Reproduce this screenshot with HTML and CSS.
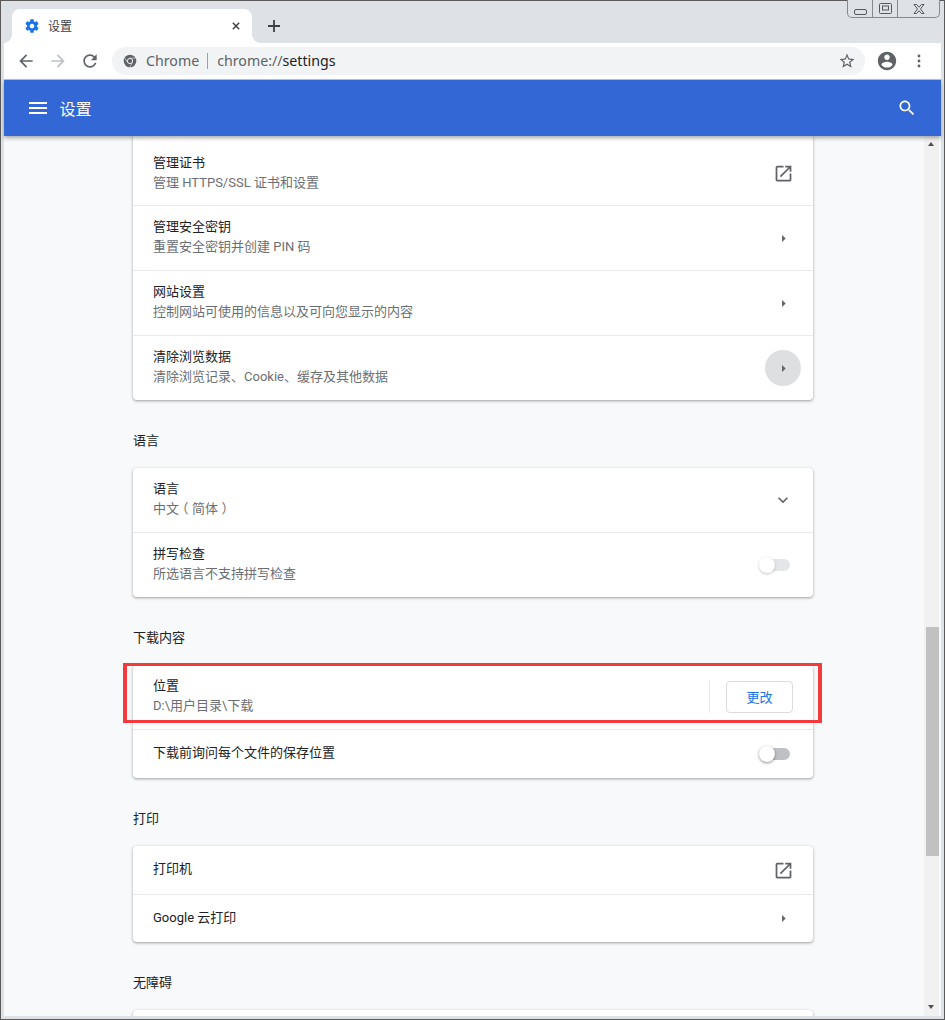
FILE: index.html
```html
<!DOCTYPE html>
<html lang="zh-CN">
<head>
<meta charset="utf-8">
<title>设置</title>
<link rel="stylesheet" href="styles.css">
</head>
<body>
<div class="window">
  <div class="tabstrip">
    <div class="tab">
      <svg class="tab-icon" viewBox="0 0 24 24"><path d="M19.43 12.98c.04-.32.07-.64.07-.98s-.03-.66-.07-.98l2.11-1.65c.19-.15.24-.42.12-.64l-2-3.46c-.12-.22-.39-.3-.61-.22l-2.49 1c-.52-.4-1.08-.73-1.69-.98l-.38-2.65C14.46 2.18 14.25 2 14 2h-4c-.25 0-.46.18-.49.42l-.38 2.65c-.61.25-1.17.59-1.69.98l-2.49-1c-.23-.09-.49 0-.61.22l-2 3.46c-.13.22-.07.49.12.64l2.11 1.65c-.04.32-.07.65-.07.98s.03.66.07.98l-2.11 1.65c-.19.15-.24.42-.12.64l2 3.46c.12.22.39.3.61.22l2.49-1c.52.4 1.08.73 1.69.98l.38 2.65c.03.24.24.42.49.42h4c.25 0 .46-.18.49-.42l.38-2.65c.61-.25 1.17-.59 1.69-.98l2.49 1c.23.09.49 0 .61-.22l2-3.46c.12-.22.07-.49-.12-.64l-2.11-1.65zM12 15.5c-1.93 0-3.5-1.57-3.5-3.5s1.57-3.5 3.5-3.5 3.5 1.57 3.5 3.5-1.57 3.5-3.5 3.5z"/></svg>
      <span class="tab-title">设置</span>
      <svg class="tab-close" viewBox="0 0 10 10"><path d="M1 1l8 8M9 1l-8 8"/></svg>
    </div>
    <svg class="new-tab" viewBox="0 0 12 12"><path d="M6 0v12M0 6h12"/></svg>
  </div>

  <div class="toolbar">
    <svg class="tool tool-back" viewBox="0 0 24 24"><path d="M20 11H7.830l5.590-5.590L12 4l-8 8 8 8 1.410-1.410L7.830 13H20v-2z"/></svg>
    <svg class="tool tool-forward" viewBox="0 0 24 24"><path d="M12 4l-1.410 1.410L16.170 11H4v2h12.170l-5.580 5.590L12 20l8-8z"/></svg>
    <svg class="tool tool-reload" viewBox="0 0 24 24"><path d="M17.65 6.35C16.2 4.9 14.21 4 12 4c-4.42 0-7.99 3.58-7.99 8s3.57 8 7.99 8c3.73 0 6.84-2.55 7.73-6h-2.08c-.82 2.33-3.04 4-5.65 4-3.31 0-6-2.69-6-6s2.69-6 6-6c1.66 0 3.14.69 4.22 1.78L13 11h7V4l-2.35 2.35z"/></svg>
    <div class="omnibox">
      <svg class="chrome-logo" viewBox="0 0 16 16">
        <circle cx="8" cy="8" r="7.2"/>
        <path class="chrome-cut" d="M8 4.700h6.400M5.100 9.700L1.900 4.200M10.900 9.700l-3.200 5.500"/>
        <circle class="chrome-ring" cx="8" cy="8" r="3"/>
      </svg>
      <span class="omni-site">Chrome</span>
      <span class="omni-sep"></span>
      <span class="omni-url"><span class="omni-scheme">chrome://</span>settings</span>
      <svg class="omni-star" viewBox="0 0 24 24"><path d="M22 9.24l-7.19-.62L12 2 9.19 8.63 2 9.24l5.46 4.73L5.82 21 12 17.27 18.18 21l-1.63-7.03L22 9.24zM12 15.4l-3.76 2.27 1-4.28-3.32-2.88 4.38-.38L12 6.1l1.71 4.04 4.38.38-3.32 2.88 1 4.28L12 15.4z"/></svg>
    </div>
    <svg class="tool tool-account" viewBox="0 0 24 24"><path d="M12 2C6.48 2 2 6.48 2 12s4.48 10 10 10 10-4.48 10-10S17.52 2 12 2zm0 3c1.66 0 3 1.34 3 3s-1.34 3-3 3-3-1.34-3-3 1.34-3 3-3zm0 14.2c-2.5 0-4.71-1.28-6-3.22.03-1.99 4-3.08 6-3.08 1.99 0 5.97 1.09 6 3.08-1.29 1.94-3.5 3.22-6 3.22z"/></svg>
    <svg class="tool tool-menu" viewBox="0 0 24 24"><circle cx="12" cy="6" r="1.7"/><circle cx="12" cy="12" r="1.7"/><circle cx="12" cy="18" r="1.7"/></svg>
  </div>

  <header class="appbar">
    <svg class="app-menu" viewBox="0 0 24 24"><path d="M3 18h18v-2H3v2zm0-5h18v-2H3v2zm0-7v2h18V6H3z"/></svg>
    <h1 class="app-title">设置</h1>
    <svg class="app-search" viewBox="0 0 24 24"><path d="M15.5 14h-.79l-.28-.27C15.41 12.59 16 11.11 16 9.5 16 5.91 13.09 3 9.5 3S3 5.91 3 9.5 5.91 16 9.5 16c1.61 0 3.09-.59 4.23-1.57l.27.28v.79l5 4.99L20.49 19l-4.99-5zm-6 0C7.01 14 5 11.99 5 9.5S7.01 5 9.5 5 14 7.01 14 9.5 11.99 14 9.5 14z"/></svg>
  </header>

  <div class="viewport">
    <main class="content">
      <section class="card card-cut">
        <div class="row row-two row-first">
          <div class="row-text"><div class="row-label">管理证书</div><div class="row-sub">管理 HTTPS/SSL 证书和设置</div></div>
          <span class="slot"><svg class="ic-open" viewBox="0 0 24 24"><path d="M19 19H5V5h7V3H5c-1.11 0-2 .9-2 2v14c0 1.1.89 2 2 2h14c1.1 0 2-.9 2-2v-7h-2v7zM14 3v2h3.59l-9.83 9.83 1.41 1.41L19 6.41V10h2V3h-7z"/></svg></span>
        </div>
        <div class="row row-two">
          <div class="row-text"><div class="row-label">管理安全密钥</div><div class="row-sub">重置安全密钥并创建 PIN 码</div></div>
          <span class="slot"><svg class="ic-arrow" viewBox="0 0 24 24"><path d="M10 7l5 5-5 5z"/></svg></span>
        </div>
        <div class="row row-two">
          <div class="row-text"><div class="row-label">网站设置</div><div class="row-sub">控制网站可使用的信息以及可向您显示的内容</div></div>
          <span class="slot"><svg class="ic-arrow" viewBox="0 0 24 24"><path d="M10 7l5 5-5 5z"/></svg></span>
        </div>
        <div class="row row-two">
          <div class="row-text"><div class="row-label">清除浏览数据</div><div class="row-sub">清除浏览记录、Cookie、缓存及其他数据</div></div>
          <span class="slot slot-hover"><svg class="ic-arrow" viewBox="0 0 24 24"><path d="M10 7l5 5-5 5z"/></svg></span>
        </div>
      </section>

      <h2 class="section-title">语言</h2>
      <section class="card">
        <div class="row row-two row-first">
          <div class="row-text"><div class="row-label">语言</div><div class="row-sub">中文<span class="paren-open">（</span>简体<span class="paren-close">）</span></div></div>
          <span class="slot"><svg class="ic-expand" viewBox="0 0 24 24"><path d="M16.59 8.59L12 13.17 7.41 8.59 6 10l6 6 6-6z"/></svg></span>
        </div>
        <div class="row row-two">
          <div class="row-text"><div class="row-label">拼写检查</div><div class="row-sub">所选语言不支持拼写检查</div></div>
          <span class="toggle toggle-off"><span class="knob"></span></span>
        </div>
      </section>

      <h2 class="section-title">下载内容</h2>
      <section class="card">
        <div class="row row-two row-first">
          <div class="row-text"><div class="row-label">位置</div><div class="row-sub">D:\用户目录\下载</div></div>
          <span class="row-sep"></span>
          <button class="btn" type="button">更改</button>
        </div>
        <div class="row row-one">
          <div class="row-text"><div class="row-label">下载前询问每个文件的保存位置</div></div>
          <span class="toggle"><span class="knob"></span></span>
        </div>
        <div class="highlight"></div>
      </section>

      <h2 class="section-title">打印</h2>
      <section class="card">
        <div class="row row-one row-first">
          <div class="row-text"><div class="row-label">打印机</div></div>
          <span class="slot"><svg class="ic-open" viewBox="0 0 24 24"><path d="M19 19H5V5h7V3H5c-1.11 0-2 .9-2 2v14c0 1.1.89 2 2 2h14c1.1 0 2-.9 2-2v-7h-2v7zM14 3v2h3.59l-9.83 9.83 1.41 1.41L19 6.41V10h2V3h-7z"/></svg></span>
        </div>
        <div class="row row-one row-last">
          <div class="row-text"><div class="row-label">Google 云打印</div></div>
          <span class="slot"><svg class="ic-arrow" viewBox="0 0 24 24"><path d="M10 7l5 5-5 5z"/></svg></span>
        </div>
      </section>

      <h2 class="section-title">无障碍</h2>
      <section class="card card-tail"></section>
    </main>

    <div class="scrollbar">
      <span class="sb-arrow sb-up"></span>
      <div class="sb-track"><div class="sb-thumb"></div></div>
      <span class="sb-arrow sb-down"></span>
    </div>
  </div>

  <div class="winctl">
    <span class="winbtn winbtn-min"><svg viewBox="0 0 13 6"><rect x="0.5" y="0.5" width="12" height="5" rx="1.5"/></svg></span>
    <span class="winbtn winbtn-max"><svg viewBox="0 0 13 11"><rect x="0.5" y="0.5" width="12" height="10" rx="1"/><rect x="3.5" y="3" width="6" height="4"/></svg></span>
    <span class="winbtn winbtn-close"><svg viewBox="0 0 12 10"><path d="M1 .5h2.500L6 3.200 8.500 .5H11L7.500 5 11 9.500H8.500L6 6.800 3.500 9.500H1L4.500 5z"/></svg></span>
  </div>
</div>
</body>
</html>
```
FILE: styles.css
```css
* { box-sizing: border-box; }
html, body { margin: 0; padding: 0; }
body {
  width: 945px;
  height: 1020px;
  overflow: hidden;
  font-family: Roboto, "Noto Sans CJK SC", sans-serif;
  font-size: 13px;
  color: #202124;
  background: #dee1e6;
}
.window {
  position: relative;
  width: 945px;
  height: 1020px;
  display: flex;
  flex-direction: column;
  background: #dee1e6;
  border: 1px solid #5a5a5a;
  padding: 0 3px 3px 3px;
}

/* tab strip */
.tabstrip {
  height: 42px;
  flex: none;
  display: flex;
  align-items: flex-end;
  padding-left: 8px;
}
.tab {
  position: relative;
  width: 240px;
  height: 34px;
  background: #fff;
  border-radius: 8px 8px 0 0;
  display: flex;
  align-items: center;
  padding: 0 11px 0 12px;
}
.tab::before, .tab::after {
  content: "";
  position: absolute;
  bottom: 0;
  width: 8px;
  height: 8px;
}
.tab::before {
  left: -8px;
  background: radial-gradient(circle at 0 0, transparent 7.5px, #fff 8px);
}
.tab::after {
  right: -8px;
  background: radial-gradient(circle at 100% 0, transparent 7.5px, #fff 8px);
}
.tab-icon { width: 16px; height: 16px; fill: #1a73e8; flex: none; }
.tab-title { margin-left: 8px; padding-bottom: 2px; font-size: 12px; flex: 1; color: #3c4043; }
.tab-close { width: 8px; height: 8px; stroke: #3c4043; stroke-width: 1.8; fill: none; flex: none; margin-right: 1px; }
.new-tab {
  width: 12px;
  height: 12px;
  stroke: #3c4043;
  stroke-width: 1.8;
  fill: none;
  margin: 0 0 11px 16px;
  flex: none;
}

/* toolbar */
.toolbar {
  height: 37px;
  flex: none;
  background: #fff;
  border-bottom: 1px solid #c4c6c9;
  display: flex;
  align-items: center;
  position: relative;
}
.tool { width: 20px; height: 20px; fill: #5f6368; flex: none; }
.tool-back { margin-left: 12px; }
.tool-forward { margin-left: 12px; fill: #bdc1c6; }
.tool-reload { margin-left: 12px; }
.tool-account { width: 22px; height: 22px; margin-left: 11px; }
.tool-menu { margin-left: 11px; }
.omnibox {
  width: 753px;
  height: 28px;
  margin-left: 12px;
  border-radius: 14px;
  background: #f1f3f4;
  display: flex;
  align-items: center;
  padding: 0 9px 0 11px;
  font-family: "Noto Sans", sans-serif;
  font-size: 14.2px;
  line-height: 26px;
  flex: none;
}
.chrome-logo { width: 14px; height: 14px; flex: none; fill: #5f6368; }
.chrome-cut { stroke: #f1f3f4; stroke-width: .7; fill: none; }
.chrome-ring { fill: #5f6368; stroke: #f1f3f4; stroke-width: 1.1; }
.omni-site { margin-left: 9px; color: #5f6368; }
.omni-sep { width: 1px; height: 16px; background: #9aa0a6; margin: 0 9px 0 8px; }
.omni-url { flex: 1; color: #202124; }
.omni-scheme { color: #5f6368; }
.omni-star { width: 18px; height: 18px; fill: #5f6368; flex: none; }

/* blue bar */
.appbar {
  height: 56px;
  flex: none;
  background: #3367d6;
  display: flex;
  align-items: center;
  color: #fff;
  padding: 0 24px 0 22px;
  box-shadow: 0 2px 4px rgba(60, 64, 67, .45);
  position: relative;
  z-index: 2;
}
.app-menu { width: 24px; height: 24px; fill: #fff; flex: none; }
.app-title { margin: 0 0 0 9.5px; font-size: 16px; font-weight: 400; flex: 1; }
.app-search { width: 20px; height: 20px; fill: #fff; flex: none; }

/* content */
.viewport {
  flex: 1;
  min-height: 0;
  display: flex;
  background: #f8f9fa;
}
.content {
  flex: 1;
  min-width: 0;
  overflow: hidden;
  padding: 0 0 0 129px;
}
.card {
  position: relative;
  width: 680px;
  background: #fff;
  border-radius: 4px;
  box-shadow: 0 1px 2px 0 rgba(60, 64, 67, .3), 0 1px 3px 1px rgba(60, 64, 67, .15);
}
.card-cut { border-radius: 0 0 4px 4px; }
.card-tail { height: 40px; }
.section-title {
  margin: 31px 0 17px;
  font-size: 13px;
  line-height: 20px;
  font-weight: 400;
  color: #202124;
}
.row {
  display: flex;
  align-items: center;
  padding-left: 20px;
  border-top: 1px solid #e8eaed;
}
.row-first { border-top: 0; }
.row-two { height: 65px; }
.row-two.row-first { height: 64px; }
.card-cut .row-two.row-first { height: 69px; padding-top: 7px; }
.row-one { height: 49px; }
.row-one.row-first { height: 48px; }
.row-one.row-last { height: 48px; }
.row-text { flex: 1; min-width: 0; padding-bottom: 2px; }
.row-label { line-height: 20px; color: #202124; }
.row-sub { line-height: 20px; color: #6b6f74; }
.paren-open, .paren-close { font-feature-settings: "halt"; }
.paren-open { padding: 0 3.5px 0 3px; }
.paren-close { padding: 0 3px 0 3.5px; }
.slot {
  width: 36px;
  height: 36px;
  margin-right: 12px;
  display: flex;
  align-items: center;
  justify-content: center;
  border-radius: 50%;
  flex: none;
}
.card-cut .row-first .slot { margin-top: -2px; }
.slot-hover { background: #dedfe1; }
.ic-open { width: 21px; height: 21px; fill: #5f6368; }
.ic-arrow { width: 17px; height: 17px; fill: #5f6368; }
.ic-expand { width: 20px; height: 20px; fill: #5f6368; }
.row-sep { width: 1px; height: 32px; background: #e8eaed; flex: none; }
.btn {
  width: 67px;
  height: 32px;
  margin: 0 20px 0 16px;
  padding: 0 0 2px;
  background: #fff;
  border: 1px solid #dadce0;
  border-radius: 4px;
  color: #1a73e8;
  font: inherit;
  flex: none;
}
.toggle {
  position: relative;
  width: 30px;
  height: 12px;
  margin-right: 23px;
  border-radius: 6px;
  background: #bdc1c6;
  flex: none;
}
.knob {
  position: absolute;
  left: -1px;
  top: -2px;
  width: 16px;
  height: 16px;
  border-radius: 50%;
  background: #fff;
  box-shadow: 0 1px 3px rgba(0, 0, 0, .45);
}
.toggle-off { background: #e4e6e9; }
.toggle-off .knob { box-shadow: 0 1px 3px rgba(0, 0, 0, .22); }
.highlight {
  position: absolute;
  left: -10px;
  top: -2px;
  width: 699px;
  height: 60px;
  border: solid #f33a3c;
  border-width: 3px 4px;
  pointer-events: none;
}

/* scrollbar */
.scrollbar {
  width: 17px;
  flex: none;
  background: #f1f1f1;
  display: flex;
  flex-direction: column;
  border-right: 2px solid #f8f9fa;
  position: relative;
  z-index: 1;
}
.sb-arrow {
  height: 17px;
  flex: none;
  position: relative;
}
.sb-arrow::after {
  content: "";
  position: absolute;
  left: 4px;
  border-left: 3.5px solid transparent;
  border-right: 3.5px solid transparent;
}
.sb-up::after { top: 6px; border-bottom: 4px solid #505050; }
.sb-down::after { top: 6px; border-top: 4px solid #505050; }
.sb-track { flex: 1; padding: 474px 0 0 2px; }
.sb-thumb { width: 13px; height: 229px; background: #c1c1c1; }

/* window controls */
.winctl {
  position: absolute;
  top: -1px;
  right: 4px;
  width: 93px;
  height: 18px;
  display: flex;
  border: 1px solid #85888c;
  border-top: 0;
  border-radius: 0 0 5px 5px;
  background: #dee1e6;
  z-index: 3;
}
.winbtn {
  display: flex;
  align-items: center;
  justify-content: center;
  border-left: 1px solid #85888c;
}
.winbtn:first-child { border-left: 0; }
.winbtn svg { fill: none; stroke: #55585c; stroke-width: 1; }
.winbtn-min { width: 24px; }
.winbtn-min svg { width: 13px; height: 6px; margin-top: 6px; }
.winbtn-max { width: 25px; }
.winbtn-max svg { width: 13px; height: 11px; }
.winbtn-close { flex: 1; }
.winbtn-close svg { width: 12px; height: 10px; }
```
